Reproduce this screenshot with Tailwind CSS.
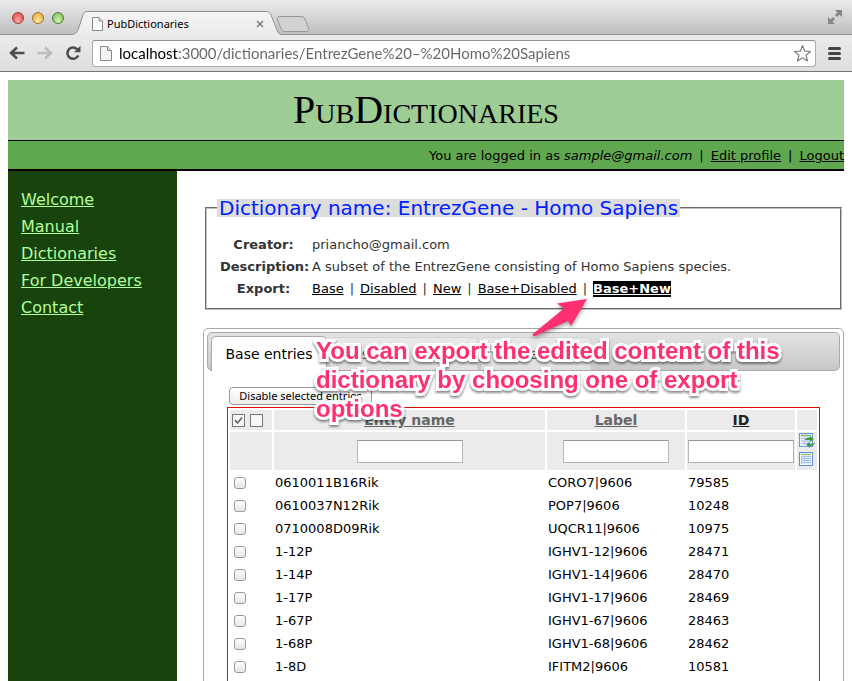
<!DOCTYPE html>
<html lang="en">
<head>
<meta charset="utf-8">
<title>PubDictionaries</title>
<meta name="viewport" content="width=device-width, initial-scale=1">
<script src="https://cdn.jsdelivr.net/npm/@tailwindcss/browser@4"></script>
</head>
<body class="flex h-screen flex-col overflow-hidden bg-white font-['DejaVu_Sans',sans-serif] text-[13px] leading-[22px] text-black">

<!-- Browser window -->
<div class="shrink-0 border-b border-[#767676]">
  <div class="flex h-[35px] items-end border-b border-[#8f8f8f] bg-linear-to-b from-[#ececec] to-[#bfbfbf] px-3">
    <div class="flex gap-2 self-center pt-[2px]">
      <button aria-label="Close window" class="size-3 rounded-full border border-[#a04040] bg-radial-[at_50%_85%] from-[#ffb0a8] to-[#dc3a3c]"></button>
      <button aria-label="Minimize window" class="size-3 rounded-full border border-[#a07030] bg-radial-[at_50%_85%] from-[#ffefa0] to-[#eb9e2c]"></button>
      <button aria-label="Zoom window" class="size-3 rounded-full border border-[#4d8038] bg-radial-[at_50%_85%] from-[#d8f8b0] to-[#6fb44c]"></button>
    </div>
    <div class="relative -mb-px ml-2 h-[25px] w-[210px]">
      <svg class="absolute inset-0 size-full" viewBox="0 0 210 25" preserveAspectRatio="none" aria-hidden="true">
        <defs><linearGradient id="tabfill" x1="0" y1="0" x2="0" y2="1"><stop offset="0" stop-color="#f4f4f4"/><stop offset="1" stop-color="#ebebeb"/></linearGradient></defs>
        <path d="M0 25V24.500C4 24 5 22 6 20L11 5C12 2 13 1.500 16 1.500H193C197 1.500 198 2.500 199 5L205 20C206 23 207 24.500 210 24.500V25Z" fill="url(#tabfill)"/>
        <path d="M0 24.500C4 24 5 22 6 20L11 5C12 2 13 1.500 16 1.500H193C197 1.500 198 2.500 199 5L205 20C206 23 207 24.500 210 24.500" fill="none" stroke="#8f8f8f"/>
      </svg>
      <div class="relative flex h-full items-center pt-[2px] pr-[18px] pl-5">
        <svg class="h-[14px] w-[11px]" viewBox="0 0 11 14" aria-hidden="true"><path d="M.5.5H7L10.500 4V13.500H.5Z" fill="#fff" stroke="#8a8a8a"/><path d="M7 .5V4H10.500" fill="#ddd" stroke="#8a8a8a"/></svg>
        <span class="ml-1 flex-1 font-['Noto_Sans',sans-serif] text-[11px]">PubDictionaries</span>
        <button aria-label="Close tab"><svg class="size-2" viewBox="0 0 8 8" aria-hidden="true"><path d="M1 1L7 7M7 1L1 7" stroke="#7c7c7c" stroke-width="1.500"/></svg></button>
      </div>
    </div>
    <button aria-label="New tab" class="-ml-[6px] mb-px"><svg class="h-[18px] w-[34px]" viewBox="0 0 34 18" aria-hidden="true"><path d="M4 1.500H25C27 1.500 28 2 29 4L32.500 13C33 15.500 32.500 16.500 30 16.500H9C7 16.500 6 15.500 5 13.500L1.500 5C.8 2.500 1.500 1.500 4 1.500Z" fill="#d2d2d2" stroke="#979797"/></svg></button>
    <button aria-label="Full screen" class="-mr-[3px] mb-[9px] ml-auto"><svg class="size-4" viewBox="0 0 16 16" aria-hidden="true"><path d="M8 1H15V8L12.500 5.500L10 8L8 6L10.500 3.500ZM1 8L3.500 10.500L6 8L8 10L5.500 12.500L8 15H1Z" fill="#858585"/></svg></button>
  </div>
  <div class="flex h-9 items-center bg-linear-to-b from-[#ebebeb] to-[#dedede] pr-[11px] pl-[9px]">
    <button aria-label="Back"><svg class="h-[14px] w-4" viewBox="0 0 16 14" aria-hidden="true"><path d="M15.500 7H3M8 1.500L2 7L8 12.500" fill="none" stroke="#4c4c4c" stroke-width="2.500"/></svg></button>
    <button aria-label="Forward" class="ml-3"><svg class="h-[14px] w-4" viewBox="0 0 16 14" aria-hidden="true"><path d="M.5 7H13M8 1.500L14 7L8 12.500" fill="none" stroke="#bcbcbc" stroke-width="2.500"/></svg></button>
    <button aria-label="Reload" class="ml-3"><svg class="size-4" viewBox="0 0 16 16" aria-hidden="true"><path d="M12.500 4.500A5.700 5.700 0 1 0 13.300 10.500" fill="none" stroke="#4c4c4c" stroke-width="2.500"/><path d="M15.500 .8V7.200H9Z" fill="#4c4c4c"/></svg></button>
    <div class="ml-[11px] flex h-[27px] flex-1 items-center rounded-[3px] border border-[#adadad] border-t-[#8f8f8f] bg-white pr-[3px] pl-[7px]">
      <svg class="h-[15px] w-3" viewBox="0 0 12 15" aria-hidden="true"><path d="M.5.5H7.500L11.500 4.500V14.500H.5Z" fill="#f4f4f4" stroke="#8a8a8a"/><path d="M7.500 .5V4.500H11.500" fill="#ddd" stroke="#8a8a8a"/></svg>
      <input aria-label="Address" class="ml-[7px] min-w-0 flex-1 bg-linear-[90deg,#000_59px,#666_59px] bg-clip-text font-['Lato',sans-serif] text-[15px] text-transparent outline-none" value="localhost:3000/dictionaries/EntrezGene%20–%20Homo%20Sapiens">
      <button aria-label="Bookmark this page"><svg class="size-[19px]" viewBox="0 0 19 19" aria-hidden="true"><path d="M9.500 1.500L11.700 7.200L17.500 7.500L13 11.300L14.600 17L9.500 13.800L4.400 17L6 11.300L1.500 7.500L7.300 7.200Z" fill="#fff" stroke="#808080" stroke-width="1.200" stroke-linejoin="round"/></svg></button>
    </div>
    <button aria-label="Menu" class="ml-3 flex flex-col gap-[2px]"><span class="h-[3px] w-[13px] rounded-full bg-[#444]"></span><span class="h-[3px] w-[13px] rounded-full bg-[#444]"></span><span class="h-[3px] w-[13px] rounded-full bg-[#444]"></span></button>
  </div>
</div>

<!-- Page -->
<div class="flex min-h-0 flex-1 flex-col px-2 pt-2">
  <header class="shrink-0">
    <h1 class="flex h-[61px] items-center justify-center border-b border-black bg-[#9dcc95] font-['Liberation_Serif',serif] text-[40px] [font-variant:small-caps]">PubDictionaries</h1>
    <p class="flex h-[30px] items-center justify-end gap-[7px] border-b-2 border-black bg-[#60a850] pt-[2px] whitespace-nowrap"><span>You are logged in as <em>sample@gmail.com</em></span><span>|</span><a class="underline" href="#">Edit profile</a><span>|</span><a class="underline" href="#">Logout</a></p>
  </header>

  <div class="flex min-h-0 flex-1">
    <nav class="w-[169px] shrink-0 bg-[#19430c] px-[13px] pt-[15px] text-base leading-[27px] text-[#b0ff9c]">
      <ul>
        <li><a class="underline" href="#">Welcome</a></li>
        <li><a class="underline" href="#">Manual</a></li>
        <li><a class="underline" href="#">Dictionaries</a></li>
        <li><a class="underline" href="#">For Developers</a></li>
        <li><a class="underline" href="#">Contact</a></li>
      </ul>
    </nav>

    <main class="relative min-w-0 flex-1 overflow-hidden pt-7 pl-[26px]">
      <fieldset class="mx-[2px] border-2 border-[#c0c0c0] px-[10px] pt-[17px] pb-2 text-[#333] [border-style:groove]">
        <legend class="bg-[#ddd] px-[2px] text-[20px] leading-[18px] whitespace-nowrap text-[#0020ff]">Dictionary name: EntrezGene - Homo Sapiens</legend>
        <dl class="grid grid-cols-[92px_1fr] pl-[3px] text-[13px]">
          <dt class="pr-[5px] text-center font-bold">Creator:</dt><dd>priancho@gmail.com</dd>
          <dt class="pr-[5px] text-center font-bold">Description:</dt><dd>A subset of the EntrezGene consisting of Homo Sapiens species.</dd>
          <dt class="pr-[5px] text-center font-bold">Export:</dt>
          <dd class="flex items-center gap-[6px]"><a class="text-black underline" href="#">Base</a>|<a class="text-black underline" href="#">Disabled</a>|<a class="text-black underline" href="#">New</a>|<a class="text-black underline" href="#">Base+Disabled</a>|<a class="bg-black leading-4 font-bold text-white underline" href="#">Base+New</a></dd>
        </dl>
      </fieldset>

      <section class="mt-[18px] rounded-[5px] border border-[#aaa] p-[3px]">
        <div class="flex h-[39px] items-end gap-[3px] rounded-[5px] border border-[#aaa] bg-linear-to-b from-[#e3e3e3] to-[#c8c8c8] pl-[3px] text-sm leading-[32px]" role="tablist">
          <button role="tab" aria-selected="true" class="-mb-px h-[35px] w-[116px] rounded-t-[5px] border border-b-0 border-[#aaa] bg-white text-center">Base entries</button>
          <button role="tab" aria-selected="false" class="h-[33px] w-[148px] rounded-t-[5px] border border-b-0 border-[#d3d3d3] bg-linear-to-b from-[#e8e8e8] to-[#e0e0e0] text-[#555]">Disabled entries</button>
          <button role="tab" aria-selected="false" class="h-[33px] w-[110px] rounded-t-[5px] border border-b-0 border-[#d3d3d3] bg-linear-to-b from-[#e8e8e8] to-[#e0e0e0] text-[#555]">New entries</button>
        </div>
        <div class="px-5 pt-4">
          <button class="ml-[2px] block h-[18px] w-[143px] rounded-[4px] border border-[#999] bg-linear-to-b from-white to-[#ececec] text-center font-['Noto_Sans',sans-serif] text-[11px] leading-4 whitespace-nowrap">Disable selected entries</button>
          <table class="mt-[2px] w-full table-fixed border-separate border-spacing-[2px] border border-[#e01000] pb-4 text-[13px] leading-[21px]">
            <colgroup><col class="w-[42px]"><col><col class="w-[138px]"><col class="w-[108px]"><col class="w-5"></colgroup>
            <thead class="bg-[#ebebeb] text-sm">
              <tr class="h-5 leading-5">
                <td><div class="flex gap-[5px] pl-[2px]">
                  <button aria-label="Select all"><svg class="block size-[13px]" viewBox="0 0 13 13" aria-hidden="true"><rect x=".5" y=".5" width="12" height="12" fill="#f8f8f8" stroke="#777"/><path d="M3 6L5.500 9L10 3.500" fill="none" stroke="#666" stroke-width="1.700"/></svg></button>
                  <button aria-label="Clear selection"><svg class="block size-[13px]" viewBox="0 0 13 13" aria-hidden="true"><rect x=".5" y=".5" width="12" height="12" fill="#f8f8f8" stroke="#777"/></svg></button>
                </div></td>
                <th><a class="text-[#666] underline" href="#">Entry name</a></th>
                <th><a class="text-[#666] underline" href="#">Label</a></th>
                <th><a class="text-[#222] underline" href="#">ID</a></th>
                <td></td>
              </tr>
              <tr class="h-[38px]">
                <td></td>
                <td><input aria-label="Filter by entry name" class="mx-auto block h-[23px] w-[106px] border border-[#b5b5b5] border-t-[#999] bg-white px-1"></td>
                <td><input aria-label="Filter by label" class="mx-auto block h-[23px] w-[106px] border border-[#b5b5b5] border-t-[#999] bg-white px-1"></td>
                <td><input aria-label="Filter by ID" class="mx-auto block h-[23px] w-[106px] border border-[#b5b5b5] border-t-[#999] bg-white px-1"></td>
                <td class="align-top"><div class="flex flex-col gap-1 pt-px pl-[2px]">
                  <button aria-label="Apply filter"><svg class="block h-[15px] w-4" viewBox="0 0 16 15" aria-hidden="true"><rect x=".5" y=".5" width="13" height="13" fill="#e8f1fd" stroke="#6d9bd8"/><path d="M2 2.500H12" stroke="#85b86a" stroke-width="1.500"/><path d="M2 5.500H12M2 8H12M2 10.500H12M5.500 4V12M9 4V12" stroke="#a9c6ec"/><path d="M6 7C7 4.500 9 4.500 11 4.500V3L15 6L11 9V7C9 7 8 7 6 7ZM16 9C15 12.500 13 13 11 13V15L7 11.500L11 9V11C13 11 14 10.500 16 9Z" fill="#459540"/></svg></button>
                  <button aria-label="Reset filter"><svg class="block size-[14px]" viewBox="0 0 14 14" aria-hidden="true"><rect x=".5" y=".5" width="13" height="13" fill="#fff" stroke="#5f90d6"/><rect x="2" y="4" width="10" height="8" fill="#a3c3ee"/><path d="M2 2.500H12" stroke="#8fbf72" stroke-width="1.500"/><path d="M3 5.500H5M6 5.500H8.500M9.500 5.500H11.500M3 7.500H5M6 7.500H8.500M9.500 7.500H11.500M3 9.500H5M6 9.500H8.500M9.500 9.500H11.500M3 11.500H5M6 11.500H8.500M9.500 11.500H11.500" stroke="#fff"/></svg></button>
                </div></td>
              </tr>
            </thead>
            <tbody id="entries"></tbody>
          </table>
        </div>
      </section>

      <!-- Callout over the page -->
      <svg class="absolute top-[126px] left-[353px] h-[44px] w-[60px] drop-shadow-[0_2px_2px_rgb(0_0_0/0.4)]" viewBox="0 0 60 44" aria-hidden="true"><path d="M57 2L27 6.500L34 11.500L3 37Q2 39.500 5 39L38 24L41 29Z" fill="#ff3070"/></svg>
      <p class="absolute top-[165px] left-[139px] font-['Liberation_Sans',sans-serif] text-[24px] leading-[29px] font-bold whitespace-nowrap text-[#ff3070] drop-shadow-[0_2px_1px_rgb(0_0_0/0.45)] [-webkit-text-stroke:6px_white] [paint-order:stroke_fill] [stroke-linejoin:round]">You can export the edited content of this<br>dictionary by choosing one of export<br>options</p>
    </main>
  </div>
</div>

<script>
const entries = [
  ['0610011B16Rik', 'CORO7|9606', '79585'],
  ['0610037N12Rik', 'POP7|9606', '10248'],
  ['0710008D09Rik', 'UQCR11|9606', '10975'],
  ['1-12P', 'IGHV1-12|9606', '28471'],
  ['1-14P', 'IGHV1-14|9606', '28470'],
  ['1-17P', 'IGHV1-17|9606', '28469'],
  ['1-67P', 'IGHV1-67|9606', '28463'],
  ['1-68P', 'IGHV1-68|9606', '28462'],
  ['1-8D', 'IFITM2|9606', '10581'],
];
document.getElementById('entries').innerHTML = entries.map(([name, label, id]) => `
  <tr>
    <td><input type="checkbox" aria-label="Select ${name}" class="ml-1 block size-3 appearance-none rounded-[3px] border border-[#999] bg-linear-to-b from-white to-[#e6e6e6]"></td>
    <td class="pl-px">${name}</td>
    <td class="pl-px">${label}</td>
    <td class="pl-px">${id}</td>
    <td></td>
  </tr>`).join('');
</script>
</body>
</html>
